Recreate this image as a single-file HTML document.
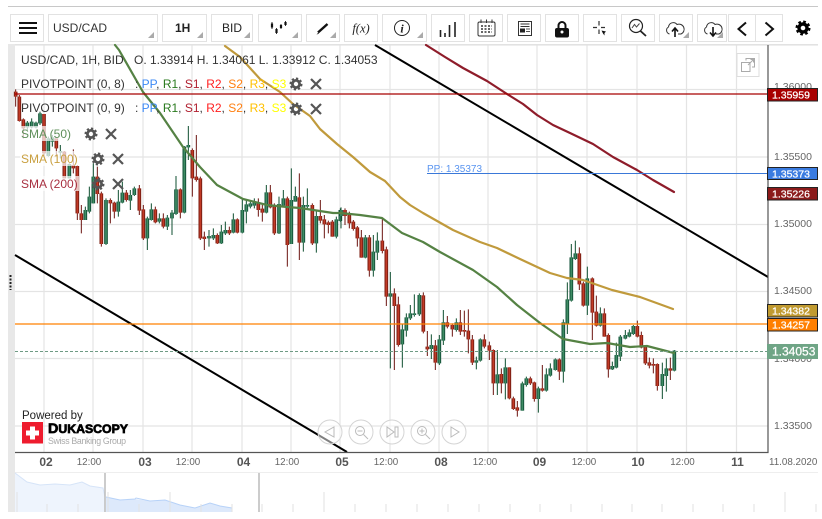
<!DOCTYPE html>
<html><head><meta charset="utf-8"><style>
html,body{margin:0;padding:0;background:#fff;width:822px;height:519px;overflow:hidden}
svg{display:block;font-family:"Liberation Sans",sans-serif}
</style></head><body>
<svg xmlns="http://www.w3.org/2000/svg" width="822" height="519" viewBox="0 0 822 519">
<defs>
<g id="gear"><circle r="3.6" fill="none" stroke="#555" stroke-width="2.8"/><circle r="5.4" fill="none" stroke="#555" stroke-width="2.2" stroke-dasharray="2.2 2"/></g>
<g id="gearb"><circle r="4" fill="none" stroke="#000" stroke-width="3.4"/><circle r="6.2" fill="none" stroke="#000" stroke-width="2.6" stroke-dasharray="2.6 2.27"/></g>
<path id="xx" d="M-5-5L5 5M5-5L-5 5" stroke="#555" stroke-width="2.2" fill="none"/>
<path id="tri" d="M6 0V6H0Z" fill="#aaa"/>
<path id="rbA" fill="none" d="M47 125V140M58 140V213M70 208V235M132 192V310M169 265V295M193 305V385M220 345V355M232 348V490M244 490V510M292 380V432M304 430V582M331 450V460M343 458V485M379 428V450M418 415V482M430 478V565M466 478V517M490 505V530M541 418V488M577 300V385M589 380V390M601 385V565M613 560V567M652 555V580M688 540V550M712 508V548M775 460V480M787 476V488M811 427V472M823 465V550M862 445V585M898 442V578M937 465V580M961 498V512M973 508V523M985 517V525M997 515V560"/>
<path id="gbA" fill="none" d="M82 218V232M95 215V232M108 218V232M120 190V220M145 265V318M157 262V275M181 303V308M208 342V385M256 480V510M268 440V485M280 380V460M318 450V582M355 455V485M367 428V458M391 435V452M403 415V435M442 505V565M454 478V510M478 505V515M502 503V530M516 488V505M528 418V492M553 290V488M565 285V292M627 558V565M640 555V565M664 545V580M676 540V550M700 508V548M727 480V548M739 463V485M751 460V470M763 455V467M799 427V488M837 462V550M850 445V467M874 450V582M886 438V455M910 465V578M922 465V470M949 498V580M1009 508V560M1021 480V513"/>
<path id="rbB" fill="none" d="M15 30V48M28 42V70M40 65V87M52 82V115M64 112V173M88 112V212M127 122V153M139 148V290M163 280V318M175 313V435M250 286V395M262 440V448M286 436V488M322 367V380M337 375V388M361 367V395M373 390V395M385 392V418M397 418V488M433 418V440M448 436V452M460 450V550M484 522V550M508 502V595M520 595V627M532 622V632M571 535V550M583 547V597M607 565V572M658 478V515M718 160V253M730 250V317M757 235V338M769 335V377M793 340V410M805 405V508M892 378V410M904 405V443M916 438V490M928 487V497M940 492V497M952 492V558M991 505V512"/>
<path id="gbB" fill="none" d="M3 30V48M76 112V173M100 155V212M112 122V158M151 280V290M187 388V433M199 352V392M211 340V355M223 340V345M238 285V343M274 435V447M298 418V490M310 367V422M349 367V390M409 481V488M421 418V482M472 523V550M496 502V550M547 550V632M559 535V555M595 565V597M619 523V572M631 505V527M646 478V510M670 367V515M682 298V372M694 172V302M706 160V177M742 235V317M781 340V377M817 498V508M829 465V503M841 410V470M856 405V416M868 397V410M880 378V402M967 522V558M979 505V528M1003 452V512"/>
</defs>
<rect width="822" height="519" fill="#fff"/>
<!-- grid -->
<path d="M44 45V452M93 45V452M143 45V452M192 45V452M242 45V452M291 45V452M340 45V452M390 45V452M439 45V452M488 45V452M537 45V452M587 45V452M637 45V452M686.5 45V452M736.5 45V452M15 89.5H768M15 157H768M15 224.5H768M15 291.5H768M15 358.5H768M15 426H768" stroke="#e4e4e4" stroke-width="1.2" fill="none"/>
<!-- frame -->
<rect x="8" y="6" width="810" height="1" fill="#c8c8c8"/>
<rect x="8" y="44" width="810" height="1.6" fill="#e2e2e2"/>
<rect x="8" y="44" width="7" height="468" fill="#e8e8e8"/>
<path d="M10.5 275V290" stroke="#222" stroke-width="2" stroke-dasharray="2 1.5"/>
<!-- candles A -->
<g transform="translate(0 50) scale(.33333)">
<path fill="none" stroke="#6b1410" stroke-width="3" d="M47 118V170M58 135V215M70 205V265M132 192V320M169 265V320M193 303V385M220 298V370M232 345V510M244 465V550M292 350V460M304 425V590M331 445V520M343 455V505M379 420V455M418 405V495M430 465V570M466 470V520M490 490V535M541 415V505M577 295V440M589 255V395M601 380V570M613 545V600M652 550V582M688 530V555M712 505V550M775 445V500M787 465V515M811 405V475M823 460V555M862 440V650M898 370V630M937 460V585M961 450V520M973 495V565M985 512V550M997 510V560"/>
<path fill="none" stroke="#0f4f30" stroke-width="3" d="M82 213V240M95 205V235M108 215V235M120 185V225M145 260V320M157 255V290M181 285V325M208 340V385M256 470V510M268 410V490M280 340V460M318 445V585M355 420V500M367 395V460M391 420V480M403 410V438M442 500V600M454 460V512M478 490V520M502 495V540M516 480V555M528 378V495M553 288V490M565 228V330M627 540V590M640 535V570M664 525V582M676 515V555M700 490V550M727 445V550M739 450V520M751 450V475M763 445V475M799 405V490M837 440V552M850 420V470M874 355V582M886 410V455M910 440V605M922 415V480M949 480V608M1009 500V565M1021 475V515"/>
<use href="#rbA" stroke="#7a1d12" stroke-width="11"/><use href="#rbA" stroke="#c23a26" stroke-width="5"/>
<use href="#gbA" stroke="#14533a" stroke-width="11"/><use href="#gbA" stroke="#3f8c64" stroke-width="5"/>
</g>
<!-- candles B -->
<g transform="translate(340 200) scale(.33333)">
<path fill="none" stroke="#6b1410" stroke-width="3" d="M15 25V75M28 35V85M40 60V92M52 78V140M64 90V173M88 105V230M127 55V160M139 140V318M163 265V510M175 290V440M250 277V400M262 393V468M286 420V510M322 348V385M337 370V410M361 330V405M373 332V410M385 328V460M397 405V495M433 403V445M448 425V480M460 448V585M484 505V580M508 502V598M520 590V630M532 603V650M571 530V555M583 545V605M607 495V575M658 475V540M718 142V270M730 245V320M757 232V420M769 287V380M793 325V410M805 400V533M892 362V412M904 395V445M916 435V495M928 473V505M940 475V520M952 490V572M991 473V540"/>
<path fill="none" stroke="#0f4f30" stroke-width="3" d="M3 22V85M76 105V175M100 105V230M112 97V180M151 216V505M187 372V503M199 340V410M211 315V360M223 283V350M238 280V348M274 403V477M298 405V495M310 330V435M349 355V395M409 470V508M421 415V485M472 450V585M496 475V598M547 545V632M559 530V560M595 560V638M619 505V575M631 490V530M646 475V512M670 358V548M682 247V402M694 132V305M706 122V180M742 200V345M781 322V380M817 485V510M829 428V505M841 405V483M856 390V418M868 388V412M880 375V405M967 488V597M979 475V575M1003 450V514"/>
<use href="#rbB" stroke="#7a1d12" stroke-width="11"/><use href="#rbB" stroke="#c23a26" stroke-width="5"/>
<use href="#gbB" stroke="#14533a" stroke-width="11"/><use href="#gbB" stroke="#3f8c64" stroke-width="5"/>
</g>
<!-- SMA lines -->
<g fill="none" stroke-width="2.2" stroke-linejoin="round" stroke-linecap="round">
<path stroke="#558244" d="M115 45L119 50L143 92L160 113L183 147L200 167L217 185L243 199L267 205L287 207L300 208L333 213L340 213L360 215L382 218L402 233L423 242L440 252L473 270L497 287L517 305L540 323L563 339L590 344L607 343L630 347L647 346L674 353"/>
<path stroke="#c09a3c" d="M225 46L240 57L260 79L280 92L293 104L310 116L320 129L337 144L353 157L370 172L385 181L400 197L410 205L423 213L453 230L480 242L497 248L520 259L550 273L567 278L583 280L612 290L640 297L673 309"/>
<path stroke="#8e1c2a" d="M426 45L445 57L463 68L487 81L507 94L523 104L537 115L553 125L570 133L593 144L613 157L637 170L653 180L674 192"/>
</g>
<!-- trend lines -->
<path d="M375 45L768 277M15 255L347 452" stroke="#000" stroke-width="2" fill="none"/>
<!-- horizontal levels -->
<path d="M15 94H768" stroke="#a80000" stroke-width="1.2"/>
<path d="M15 324H768" stroke="#ff8000" stroke-width="1.2"/>
<path d="M427 173.5H768" stroke="#3a78d8" stroke-width="1"/>
<path d="M15 351.5H768" stroke="#6f9a84" stroke-width="1" stroke-dasharray="3 2"/>
<text x="427" y="172" font-size="10" fill="#5a95f0">PP: 1.35373</text>
<!-- frame lines -->
<path d="M768 45V452.5H15" stroke="#555" stroke-width="1.2" fill="none"/>
<!-- legend backgrounds -->
<rect x="20" y="126" width="52" height="15" fill="#fff" fill-opacity=".7"/>
<rect x="20" y="151" width="59" height="15" fill="#fff" fill-opacity=".7"/>
<rect x="20" y="176" width="59" height="15" fill="#fff" fill-opacity=".7"/>
<!-- legend -->
<g font-size="12">
<text x="21" y="64" fill="#333">USD/CAD, 1H, BID</text>
<text x="134" y="64" fill="#333">O. 1.33914 H. 1.34061 L. 1.33912 C. 1.34053</text>
<text x="21" y="88" fill="#333">PIVOTPOINT (0, 8)</text>
<text x="135" y="88" fill="#333">: <tspan fill="#3b88f5">PP</tspan>, <tspan fill="#2a7a1e">R1</tspan>, <tspan fill="#b02030">S1</tspan>, <tspan fill="#ff2020">R2</tspan>, <tspan fill="#ff7f10">S2</tspan>, <tspan fill="#ffc000">R3</tspan>, <tspan fill="#ffff00">S3</tspan></text>
<text x="21" y="112" fill="#333">PIVOTPOINT (0, 9)</text>
<text x="135" y="112" fill="#333">: <tspan fill="#3b88f5">PP</tspan>, <tspan fill="#2a7a1e">R1</tspan>, <tspan fill="#b02030">S1</tspan>, <tspan fill="#ff2020">R2</tspan>, <tspan fill="#ff7f10">S2</tspan>, <tspan fill="#ffc000">R3</tspan>, <tspan fill="#ffff00">S3</tspan></text>
<text x="21" y="138" fill="#5f8f5a">SMA (50)</text>
<text x="21" y="163" fill="#c9a040">SMA (100)</text>
<text x="21" y="188" fill="#a83040">SMA (200)</text>
</g>
<use href="#gear" x="296" y="84"/><use href="#xx" x="316" y="84"/>
<use href="#gear" x="296" y="109"/><use href="#xx" x="316" y="109"/>
<use href="#gear" x="91" y="134"/><use href="#xx" x="111" y="134"/>
<use href="#gear" x="98" y="159"/><use href="#xx" x="118" y="159"/>
<use href="#gear" x="98" y="184"/><use href="#xx" x="118" y="184"/>
<!-- popout -->
<rect x="737" y="53.5" width="22" height="23" fill="#fff" stroke="#ddd" stroke-width="1"/>
<path d="M746 60.5V58.5H754.5V67H752M741.5 62.5H750V71.5H741.5ZM748 65L753.5 59.5M750.5 59.500H753.5V62.5" fill="none" stroke="#aaa" stroke-width="1"/>
<!-- right axis -->
<g font-size="10.5" fill="#666">
<text x="774" y="90">1.36000</text>
<text x="774" y="160">1.35500</text>
<text x="774" y="227">1.35000</text>
<text x="774" y="294">1.34500</text>
<text x="774" y="362">1.34000</text>
<text x="774" y="429">1.33500</text>
</g>
<g font-size="10.5" fill="#fff">
<rect x="767.5" y="88.5" width="50" height="12.5" fill="#a80000" stroke="#222"/>
<text x="772" y="98.5" stroke="#fff" stroke-width=".25">1.35959</text>
<rect x="767.5" y="167.5" width="50" height="12" fill="#3a7be0" stroke="#222"/>
<text x="772" y="177.5" stroke="#fff" stroke-width=".25">1.35373</text>
<rect x="767.5" y="187.5" width="50" height="12.5" fill="#8b1a1a" stroke="#222"/>
<text x="772" y="197.5" stroke="#fff" stroke-width=".25">1.35226</text>
<rect x="767.5" y="304.5" width="50" height="12.5" fill="#c09a30" stroke="#222"/>
<text x="772" y="314.5" stroke="#fff" stroke-width=".25">1.34382</text>
<rect x="767.5" y="318.5" width="50" height="12.5" fill="#ff7f00" stroke="#222"/>
<text x="772" y="328.5" stroke="#fff" stroke-width=".25">1.34257</text>
<rect x="767" y="344" width="51" height="15" fill="#6fa586"/>
<text x="772" y="355.5" font-size="12" stroke="#fff" stroke-width=".25">1.34053</text>
</g>
<!-- logo -->
<text x="22" y="419" font-size="11.5" fill="#222">Powered by</text>
<rect x="22" y="422" width="21" height="21.5" fill="#ee1c2e"/>
<path d="M30 426.5H35V430.5H39V435.5H35V439.5H30V435.5H26V430.5H30Z" fill="#fff"/>
<text x="48" y="433" font-size="12" font-weight="bold" fill="#000" stroke="#000" stroke-width=".7" textLength="80" lengthAdjust="spacingAndGlyphs"><tspan font-size="14">D</tspan>UKASCOPY</text>
<text x="48" y="444" font-size="8.8" fill="#aaa" textLength="78">Swiss Banking Group</text>
<!-- nav circles -->
<g fill="#fff" fill-opacity=".5" stroke="#d4d4d4" stroke-width="1">
<circle cx="330" cy="432" r="12"/><circle cx="361" cy="432" r="12"/><circle cx="392" cy="432" r="12"/><circle cx="423" cy="432" r="12"/><circle cx="454" cy="432" r="12"/>
</g>
<g fill="none" stroke="#bbb" stroke-width="1">
<path d="M334 427V437L325 432Z"/>
<circle cx="360" cy="431" r="4.5"/><path d="M357.5 431H362.5M363.5 434.5L368 439"/>
<path d="M387 427V437L394 432ZM395 427H398V437H395Z"/>
<circle cx="422" cy="431" r="4.5"/><path d="M419.5 431H424.5M422 428.5V433.5M425.5 434.5L430 439"/>
<path d="M451 427V437L459 432Z"/>
</g>
<!-- time axis -->
<g fill="#555" font-size="12" font-weight="bold" text-anchor="middle">
<text x="46" y="466">02</text><text x="145" y="466">03</text><text x="243.5" y="466">04</text><text x="342" y="466">05</text><text x="441" y="466">08</text><text x="539.5" y="466">09</text><text x="638" y="466">10</text><text x="737.5" y="466">11</text>
</g>
<g fill="#666" font-size="9.8" text-anchor="middle">
<text x="89" y="465">12:00</text><text x="188" y="465">12:00</text><text x="287" y="465">12:00</text><text x="386" y="465">12:00</text><text x="485" y="465">12:00</text><text x="584" y="465">12:00</text><text x="682.5" y="465">12:00</text>
</g>
<text x="769" y="465" font-size="9.8" fill="#666">11.08.2020</text>
<!-- navigator -->
<rect x="15" y="472" width="803" height="1" fill="#eee"/>
<path d="M15 473L27 482L40 485L55 484L70 485L82 482L90 486L103 488L105 497V512H15Z" fill="#eef4fd"/>
<path d="M15 473L27 482L40 485L55 484L70 485L82 482L90 486L103 488L105 497" fill="none" stroke="#d6e4f8" stroke-width="1"/>
<path d="M106 497L120 500L135 499L150 501L165 500L180 505L195 508L210 503L220 506L232 508V512H106Z" fill="#dde9fb"/>
<path d="M106 497L120 500L135 499L136 498L150 501L165 500L180 505L195 508L210 503L220 506L232 508" fill="none" stroke="#b7d2f8" stroke-width="1"/>
<path d="M17 492V512M108 492V512M170 492V512M324 492V512M785 492V512M47 504V512M78 504V512M139 504V512M201 504V512M232 504V512M262 504V512M293 504V512M355 504V512M386 504V512M417 504V512M448 504V512M479 504V512M510 504V512M540 504V512M571 504V512M602 504V512M632 504V512M662 504V512M693 504V512M723 504V512M754 504V512M816 504V512" stroke="#e2e2e2" stroke-width="1"/>
<path d="M105 473V512M259 473V512" stroke="#bbb" stroke-width="1.5"/>
<rect x="0" y="512" width="822" height="7" fill="#fff"/>
<!-- toolbar -->
<g fill="#fff" stroke="#e2e2e2" stroke-width="1">
<rect x="10.5" y="14.5" width="33" height="27"/><rect x="48.5" y="14.5" width="109" height="27"/><rect x="162.5" y="14.5" width="44" height="27"/><rect x="211.5" y="14.5" width="41" height="27"/><rect x="258.5" y="14.5" width="43" height="27"/><rect x="306.5" y="14.5" width="33" height="27"/><rect x="344.5" y="14.5" width="33" height="27"/><rect x="382.5" y="14.5" width="44" height="27"/><rect x="431.5" y="14.5" width="33" height="27"/><rect x="469.5" y="14.5" width="33" height="27"/><rect x="507.5" y="14.5" width="33" height="27"/><rect x="545.5" y="14.5" width="33" height="27"/><rect x="583.5" y="14.5" width="33" height="27"/><rect x="621.5" y="14.5" width="33" height="27"/><rect x="659.5" y="14.5" width="33" height="27"/><rect x="697.5" y="14.5" width="29" height="27"/><rect x="728.5" y="14.5" width="27" height="27"/><rect x="755.5" y="14.5" width="27" height="27"/>
</g>
<use href="#tri" x="148" y="32"/><use href="#tri" x="197" y="32"/><use href="#tri" x="244" y="32"/><use href="#tri" x="292" y="32"/><use href="#tri" x="330" y="32"/><use href="#tri" x="417" y="32"/><use href="#tri" x="683" y="32"/><use href="#tri" x="717" y="32"/>
<path d="M19 23H37M19 28H37M19 33H37" stroke="#111" stroke-width="2"/>
<text x="53" y="32" font-size="12" fill="#333">USD/CAD</text>
<text x="175" y="32" font-size="12" fill="#222" font-weight="bold">1H</text>
<text x="222" y="32" font-size="12" fill="#222">BID</text>
<path d="M272 22V29M276.5 28V34M281 24V29M285.5 21V26" stroke="#333" stroke-width="1" fill="none"/>
<path d="M272 23.5V27.5M276.5 29V33M281 25V28M285.5 22V25" stroke="#111" stroke-width="2.2" fill="none"/>
<path d="M318 32.5L327.5 24" stroke="#111" stroke-width="2.4"/>
<path d="M318 33L316.5 34.5L319 33.8Z" fill="#111"/>
<text x="361" y="32.5" text-anchor="middle" font-size="12.5" fill="#222" font-family="Liberation Serif,serif" font-style="italic">f(x)</text>
<circle cx="402" cy="28" r="7.5" fill="none" stroke="#222" stroke-width="1"/>
<text x="402" y="32.5" text-anchor="middle" font-size="12" fill="#222" font-family="Liberation Serif,serif" font-style="italic" font-weight="bold">i</text>
<path d="M440.5 30V37M445 33V37M449.5 25V37M455 22V37" stroke="#222" stroke-width="1.6"/>
<g fill="none" stroke="#333" stroke-width="1">
<rect x="478" y="22" width="17" height="14" rx="1.5"/>
<path d="M481 19.5V23M486.5 19.5V23M492 19.5V23"/>
<path d="M481 26H492M481 29H492M481 32H492" stroke-dasharray="2 1.5" stroke-width="1.5"/>
<rect x="518.5" y="21.5" width="13" height="14"/>
<path d="M520.5 24H529.5M520.5 26.5H529.5"/>
</g>
<rect x="520" y="28.5" width="5" height="4" fill="#222"/>
<path d="M526 29H530M526 31.5H530" stroke="#555" stroke-width="1"/>
<path d="M558.5 29V25.5A3.5 3.5 0 0 1 565.5 25.5V29" fill="none" stroke="#111" stroke-width="2"/>
<rect x="555" y="28" width="14" height="9.5" rx="2" fill="#111"/>
<circle cx="562" cy="32" r="1.5" fill="#fff"/>
<path d="M599 21V25.5M599 29.5V34M593 27.5H597M601 27.5H605" stroke="#333" stroke-width="1.2"/>
<path d="M601.5 30.5L606 31.5L604.5 33L604.5 35.5L603 33.5Z" fill="#111"/>
<circle cx="636" cy="26" r="6.5" fill="none" stroke="#222" stroke-width="1.2"/>
<path d="M640.5 31L646 36" stroke="#222" stroke-width="1.8"/>
<path d="M632 28L634.5 24.5L636.5 27L639.5 23.5" fill="none" stroke="#444" stroke-width="1"/>
<path d="M669.5 34A3.8 3.8 0 0 1 668.5 27A4.8 5 0 0 1 677 24.5A4 4 0 0 1 681 34H678" fill="none" stroke="#333" stroke-width="1"/>
<path d="M675 37V29M672 31.5L675 28L678 31.5" fill="none" stroke="#111" stroke-width="1.6"/>
<path d="M707.5 34A3.8 3.8 0 0 1 706.5 27A4.8 5 0 0 1 715 24.5A4 4 0 0 1 719 34H716" fill="none" stroke="#333" stroke-width="1"/>
<path d="M713 27V35M710 32.5L713 36L716 32.5" fill="none" stroke="#111" stroke-width="1.6"/>
<path d="M746 22.5L738.5 29L746 35.5M765.5 22.5L773 29L765.5 35.5" fill="none" stroke="#111" stroke-width="2"/>
<use href="#gearb" x="803" y="28"/>
</svg>
</body></html>
